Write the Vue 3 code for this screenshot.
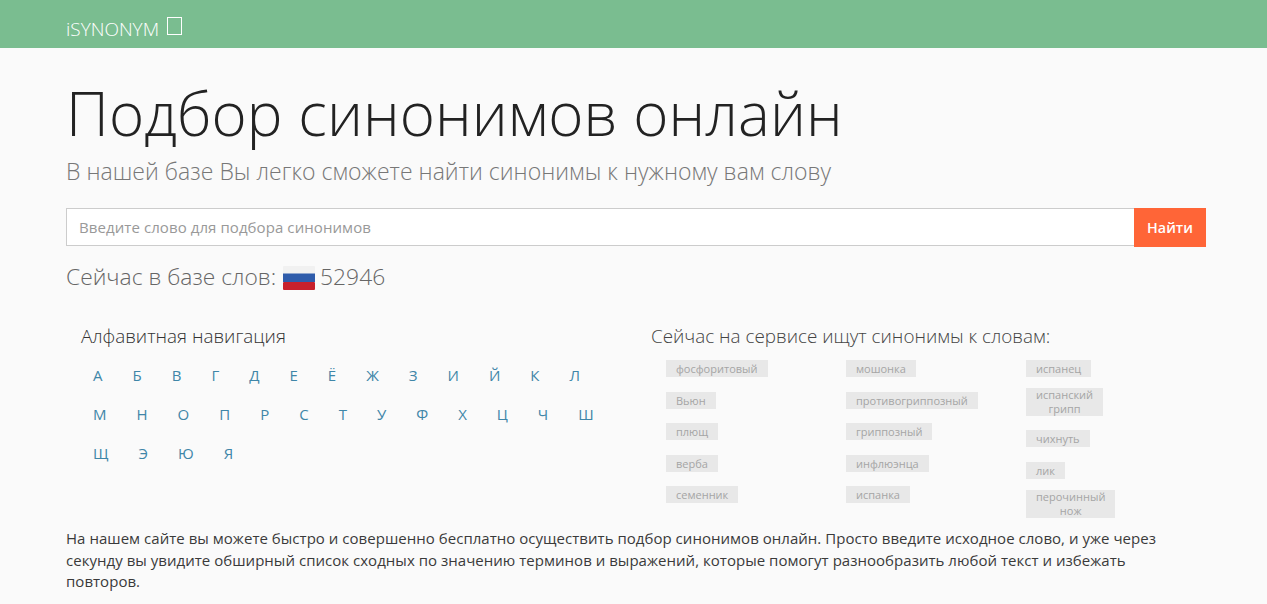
<template>
  <div class="page">
    <header class="topbar">
      <a class="brand">iSYNONYM <span class="tofu"></span></a>
    </header>

    <main class="content">
      <h1>Подбор синонимов онлайн</h1>
      <p class="lead">В нашей базе Вы легко сможете найти синонимы к нужному вам слову</p>

      <form class="search" @submit.prevent>
        <input type="text" placeholder="Введите слово для подбора синонимов" />
        <button type="submit">Найти</button>
      </form>

      <div class="count">
        Сейчас в базе слов:
        <svg class="flag" width="32" height="24" viewBox="0 0 32 24">
          <rect y="0" width="32" height="8" rx="1" fill="#f1f1f1" />
          <rect y="7.5" width="32" height="8.5" fill="#2f5cab" />
          <rect y="16" width="32" height="8" rx="1" fill="#c8202c" />
        </svg>
        52946
      </div>

      <div class="columns">
        <section class="alpha">
          <h4>Алфавитная навигация</h4>
          <div class="letters">
            <a v-for="l in letters" :key="l">{{ l }}</a>
          </div>
        </section>

        <section class="recent">
          <h4>Сейчас на сервисе ищут синонимы к словам:</h4>
          <div class="tag-cols">
            <ul v-for="(col, i) in tagCols" :key="i">
              <li v-for="t in col" :key="t" :class="{ wrap: t.includes(' ') }">{{ t }}</li>
            </ul>
          </div>
        </section>
      </div>

      <p class="about">
        На нашем сайте вы можете быстро и совершенно бесплатно осуществить подбор синонимов онлайн. Просто введите исходное слово, и уже через секунду вы увидите обширный список сходных по значению терминов и выражений, которые помогут разнообразить любой текст и избежать повторов.
      </p>
    </main>
  </div>
</template>

<script setup>
const letters = 'АБВГДЕЁЖЗИЙКЛМНОПРСТУФХЦЧШЩЭЮЯ'.split('')

const tagCols = [
  ['фосфоритовый', 'Вьюн', 'плющ', 'верба', 'семенник'],
  ['мошонка', 'противогриппозный', 'гриппозный', 'инфлюэнца', 'испанка'],
  ['испанец', 'испанский грипп', 'чихнуть', 'лик', 'перочинный нож']
]
</script>

<style>
html,
body {
  margin: 0;
  background: #fafafa;
}
</style>

<style scoped>
.page {
  height: 604px;
  overflow: hidden;
  background: #fafafa;
  font-family: "Open Sans", "Noto Sans", sans-serif;
  color: #333;
}
.topbar {
  height: 48px;
  background: #7abd90;
  padding-left: 66px;
  display: flex;
  align-items: center;
}
.brand {
  color: #fff;
  font-size: 19px;
  font-weight: 300;
  display: flex;
  align-items: center;
  gap: 8px;
  margin-top: 9px;
}
.tofu {
  width: 13px;
  height: 16px;
  border: 1px solid #fff;
  margin-top: -5px;
}
.content {
  width: 1140px;
  margin-left: 66px;
}
h1 {
  margin: 25px 0 0;
  font-size: 60px;
  line-height: 80px;
  font-weight: 300;
  letter-spacing: 0.08px;
  color: #222;
}
.lead {
  margin: 2px 0 0;
  font-size: 23px;
  line-height: 32px;
  font-weight: 300;
  letter-spacing: 0.03px;
  color: #777;
}
.search {
  display: flex;
  margin-top: 21px;
}
.search input {
  flex: 1;
  height: 36px;
  box-sizing: content-box;
  padding: 0 12px;
  border: 1px solid #ccc;
  border-right: 0;
  background: #fff;
  font: 15px "Open Sans", sans-serif;
  letter-spacing: 0.08px;
  outline: none;
}
.search input::placeholder {
  color: #999;
  opacity: 1;
}
.search button {
  width: 72px;
  height: 39px;
  border: 0;
  background: #ff6537;
  color: #fff;
  font: 600 14.3px "Open Sans", sans-serif;
}
.count {
  display: flex;
  align-items: center;
  gap: 6px;
  margin-top: 15px;
  font-size: 22.8px;
  line-height: 30px;
  font-weight: 300;
  color: #666;
}
.flag {
  margin: 2px -1px 0 1px;
}
.columns {
  display: flex;
  margin-top: 32px;
}
h4 {
  margin: 0;
  font-size: 18.85px;
  line-height: 24px;
  font-weight: 300;
}
.alpha {
  width: 570px;
  margin-left: 15px;
  flex: none;
}
.letters {
  display: flex;
  flex-wrap: wrap;
  row-gap: 15px;
  column-gap: 30px;
  width: 515px;
  margin: 15px 0 0 12px;
}
.letters a {
  font-size: 15px;
  line-height: 24px;
  color: #3f86a8;
}
.recent h4 {
  color: #444;
}
.tag-cols {
  display: flex;
  margin: 12px 0 0 15px;
}
ul {
  margin: 0;
  padding: 0;
  list-style: none;
  width: 180px;
  display: flex;
  flex-direction: column;
  align-items: flex-start;
  gap: 14.5px;
}
li {
  padding: 0 10px;
  background: #e8e8e8;
  color: #a5a5a5;
  font-size: 11px;
  line-height: 17px;
}
li.wrap {
  width: min-content;
  margin: -3.5px 0 -0.5px;
  line-height: 14px;
  text-align: center;
}
.about {
  max-width: 1125px;
  margin: 11px 0 0;
  font-size: 15px;
  line-height: 21.5px;
  letter-spacing: 0.03px;
  color: #3a3a3a;
}
</style>
